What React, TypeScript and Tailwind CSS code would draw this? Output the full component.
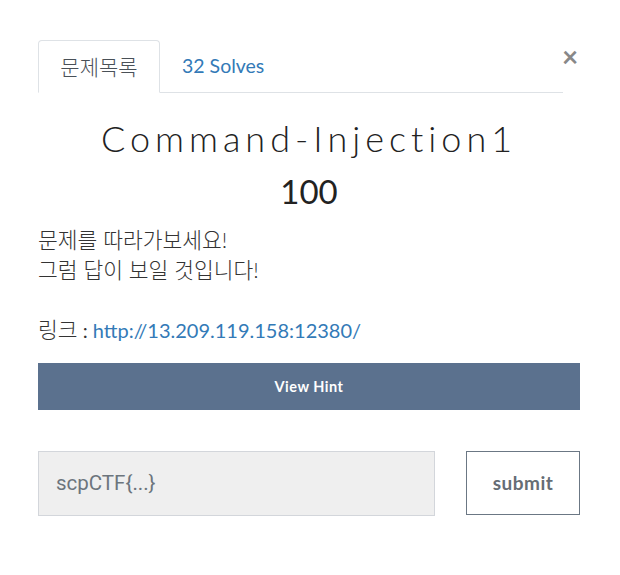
import React from 'react';

export default function App() {
  return (
    <div className="w-[620px] h-[575px] bg-white relative" style={{ fontFamily: 'Lato, "Noto Sans CJK KR", sans-serif' }}>
      <button className="absolute left-[562px] top-[42px] text-[28px] leading-none text-[#888] font-bold">×</button>
      <div className="pl-[38px] pr-[40px] pt-[40px]">
        <div className="flex w-[525px] border-b border-[#dee2e6] h-[53px]">
          <div className="w-[122px] h-[53px] -mb-px border border-[#dee2e6] border-b-white bg-white rounded-t-[4px] flex items-center justify-center text-[21px] font-light text-[#495057]">
            문제목록
          </div>
          <div className="px-[22px] flex items-center text-[19.5px] text-[#337ab7]">32 Solves</div>
        </div>
        <h2 className="text-center text-[36px] font-light tracking-[5px] text-[#222] mt-[19px] leading-[52px]">Command-Injection1</h2>
        <div className="text-center text-[33px] text-[#222] leading-[40px] mt-[7px]">100</div>
        <div className="text-[20px] text-[#333] leading-[30px] mt-[14px]">
          <p className="text-[21.5px] font-light">문제를 따라가보세요!</p>
          <p className="text-[21.5px] font-light">그럼 답이 보일 것입니다!</p>
          <p className="h-[30px]"></p>
          <p>
            <span className="text-[21.5px] font-light">링크</span> : <a className="text-[#337ab7]">http://13.209.119.158:12380/</a>
          </p>
        </div>
        <button className="mt-[18px] w-[542px] h-[47px] bg-[#5b718e] text-white text-[14.5px] font-bold tracking-[0.5px]">View Hint</button>
        <div className="flex justify-between w-[542px] mt-[41px]">
          <div className="w-[397px] h-[65px] bg-[#efefef] border border-[#d3d6db] flex items-center pl-[17px] text-[20.5px] text-[#6c757d]" style={{ fontFamily: 'Roboto, sans-serif' }}>
            scpCTF{'{'}...{'}'}
          </div>
          <button className="w-[114px] h-[64px] border border-[#6b7784] text-[19px] font-bold text-[#666d75] tracking-[0.5px]">submit</button>
        </div>
      </div>
    </div>
  );
}
